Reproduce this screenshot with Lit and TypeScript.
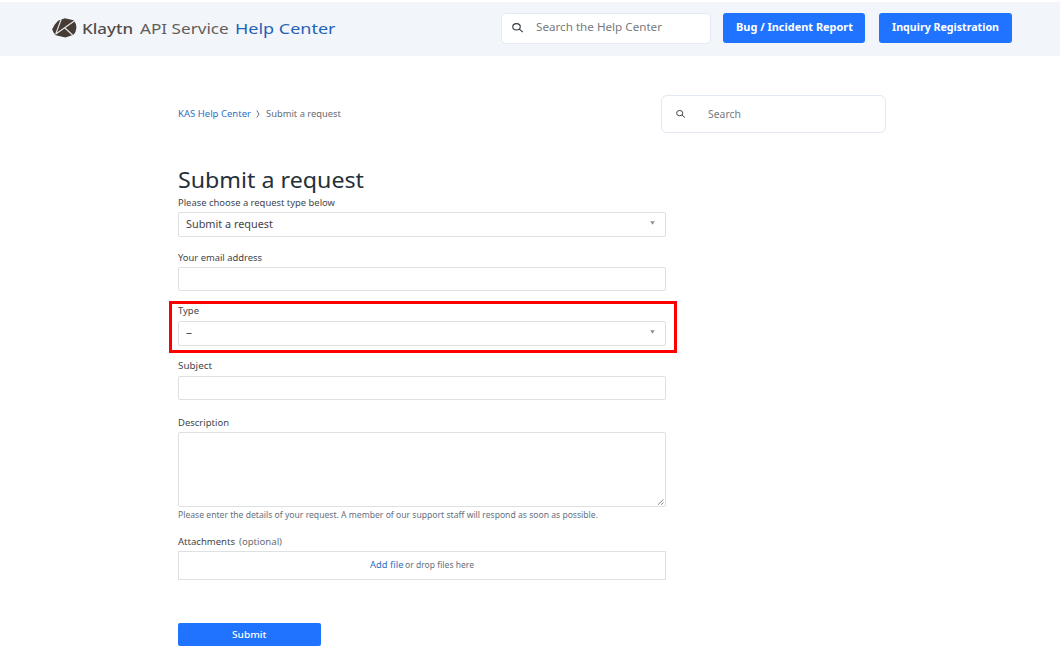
import { LitElement, html, css, svg } from "lit";
import { customElement } from "lit/decorators.js";

// One line of text set to an exact measure; `base` is the baseline inside the line box.
const line = (text: string, width: number, cls: string, base = 10, height = 14) => html`
  <svg class="line ${cls}" width=${width} height=${height}>
    <text x="0" y=${base} textLength=${width} lengthAdjust="spacingAndGlyphs">${text}</text>
  </svg>`;

const lens = (size: number) => html`
  <svg class="lens" width=${size} height=${size * 0.84} viewBox="0 0 12 10" preserveAspectRatio="none">
    ${svg`<ellipse cx="4.7" cy="3.9" rx="3.9" ry="3.3" /><path d="M7.6 6.4 11.3 9.5" />`}
  </svg>`;

const caret = html`<svg class="caret" width="5" height="4" viewBox="0 0 5 4"><path d="M0.2 0.3H4.8L2.5 3.7Z" /></svg>`;

@customElement("app-root")
export class AppRoot extends LitElement {
  static styles = css`
    :host {
      display: block;
      width: 1060px;
      height: 652px;
      overflow: hidden;
      background: #fff;
      font-family: "Noto Sans", sans-serif;
    }
    * { box-sizing: border-box; }
    svg { display: block; flex: none; overflow: visible; }
    .line { font-size: 8.6px; fill: #3f454b; }
    .brand { font-size: 15.2px; fill: #625d5a; }
    .brand-strong { font-weight: 500; fill: #524b47; }
    .brand-blue { fill: #1f63b6; }
    .placeholder { font-size: 10.8px; fill: #777b7f; }
    .placeholder-small { font-size: 10px; fill: #777b7f; }
    .button-text { font-size: 10.8px; font-weight: 700; fill: #fff; }
    .submit-text { font-size: 9.6px; font-weight: 500; fill: #fff; }
    .link { fill: #2d70c0; }
    .muted { fill: #666c74; }
    .title { font-size: 21px; fill: #25303a; }
    .value { font-size: 10px; fill: #3f454b; }
    .hint { font-size: 8.3px; fill: #667080; }
    .lens { fill: none; stroke: #33383d; stroke-width: 1.15; }

    header {
      margin-top: 2px;
      height: 54px;
      padding: 0 48px 2px 52px;
      background: #f2f6fb;
      display: flex;
      align-items: center;
    }
    .logo { display: flex; align-items: center; }
    .logo .mark { margin-right: 5.2px; }
    .logo .line + .line { margin-left: 6.5px; }
    .top-search {
      margin: 0 12px 0 auto;
      width: 210px;
      height: 31px;
      padding-left: 10px;
      border: 1px solid #e3eaf3;
      border-radius: 5px;
      background: #fff;
      display: flex;
      align-items: center;
      gap: 12.5px;
    }
    .button {
      height: 30px;
      border-radius: 3px;
      background: #1f73ff;
      display: flex;
      align-items: center;
      justify-content: center;
    }
    .report { width: 142px; margin-right: 14px; }
    .inquiry { width: 133px; }

    main { padding: 39px 174px 0 178px; }
    .sub { display: flex; align-items: center; height: 38px; }
    .chevron { margin: 0 6px 0 5px; fill: none; stroke: #666c74; }
    .search {
      margin-left: auto;
      width: 225px;
      height: 38px;
      padding-left: 14px;
      border: 1px solid #e2e8f4;
      border-radius: 6px;
      display: flex;
      align-items: center;
      gap: 22px;
    }
    form { width: 488px; margin-top: 37px; }
    .field { position: relative; margin-bottom: 13px; }
    .field.tall { margin-bottom: 16px; }
    .box {
      margin-top: 3px;
      height: 24px;
      padding: 0 10px 0 7px;
      border: 1px solid #dfe0e1;
      border-radius: 2px;
      display: flex;
      align-items: center;
      justify-content: space-between;
    }
    .select { height: 25px; }
    .caret { align-self: flex-start; margin-top: 8px; fill: #8a8f94; }
    .area {
      margin-top: 2px;
      height: 75px;
      border: 1px solid #dfe0e1;
      border-radius: 2px;
      display: flex;
      align-items: flex-end;
      justify-content: flex-end;
    }
    .grip { stroke: #777; stroke-width: 0.9; }
    .highlight {
      position: absolute;
      inset: -3px -11px -7px -9px;
      border: 3px solid #fe0000;
    }
    .label-row { display: flex; gap: 4.3px; margin-top: 14px; }
    .drop {
      margin-top: 2px;
      height: 29px;
      border: 1px solid #dfe0e1;
      display: flex;
      align-items: center;
      justify-content: center;
      gap: 2px;
    }
    .submit { width: 143px; height: 23px; margin-top: 43px; border-radius: 2px; }
  `;

  render() {
    return html`
      <header>
        <div class="logo">
          <svg class="mark" width="25" height="20" viewBox="0 0 25 20">
            <path fill="#463c36" d="M12.8 0.2 21.6 2.2Q24.3 5 24.4 9.8 24.2 13.8 21.5 16.8L13.5 19.6 3.6 17.2Q0.9 14.6 0.2 11.2 2.2 6.6 6 2.8Z" />
            <path fill="none" stroke="#e4e4e5" stroke-width="1.2" d="M9.2 1.2 3.6 16.4M22.6 2.8 3.8 16M12.6 9.8 20.6 17" />
          </svg>
          ${line("Klaytn", 51, "brand brand-strong", 16, 20)}
          ${line("API Service", 88.7, "brand", 16, 20)}
          ${line("Help Center", 100.5, "brand brand-blue", 16, 20)}
        </div>
        <div class="top-search">${lens(11.5)} ${line("Search the Help Center", 126, "placeholder", 10.4)}</div>
        <div class="button report">${line("Bug / Incident Report", 117, "button-text", 10.4)}</div>
        <div class="button inquiry">${line("Inquiry Registration", 107, "button-text", 10.4)}</div>
      </header>
      <main>
        <div class="sub">
          ${line("KAS Help Center", 73, "link")}
          <svg class="chevron" width="4" height="8" viewBox="0 0 4 8"><path d="M0.8 0.5Q2.2 2.5 3 4 2.2 5.5 0.8 7.5" /></svg>
          ${line("Submit a request", 75, "muted")}
          <div class="search">${lens(9.5)} ${line("Search", 33, "placeholder-small", 11)}</div>
        </div>
        <form>
          ${line("Submit a request", 186, "title", 18, 25)}
          <div class="field">
            ${line("Please choose a request type below", 157, "", 10.6)}
            <div class="box select">${line("Submit a request", 87, "value", 10)} ${caret}</div>
          </div>
          <div class="field">
            ${line("Your email address", 84, "", 10.6)}
            <div class="box"></div>
          </div>
          <div class="field">
            ${line("Type", 21, "", 10)}
            <div class="box select">${line("–", 6, "value", 9)} ${caret}</div>
            <div class="highlight"></div>
          </div>
          <div class="field tall">
            ${line("Subject", 34, "", 10)}
            <div class="box"></div>
          </div>
          ${line("Description", 51, "")}
          <div class="area">
            <svg class="grip" width="8" height="8" viewBox="0 0 8 8"><path d="M0.8 6.8 6.5 1.5M4 6.8 6.5 4.5" /></svg>
          </div>
          ${line("Please enter the details of your request. A member of our support staff will respond as soon as possible.", 420, "hint", 10.6)}
          <div class="label-row">${line("Attachments", 57, "")} ${line("(optional)", 43, "muted")}</div>
          <div class="drop">${line("Add file", 33.5, "link", 9)} ${line("or drop files here", 69, "hint", 9)}</div>
          <div class="button submit">${line("Submit", 34.5, "submit-text", 10)}</div>
        </form>
      </main>
    `;
  }
}
